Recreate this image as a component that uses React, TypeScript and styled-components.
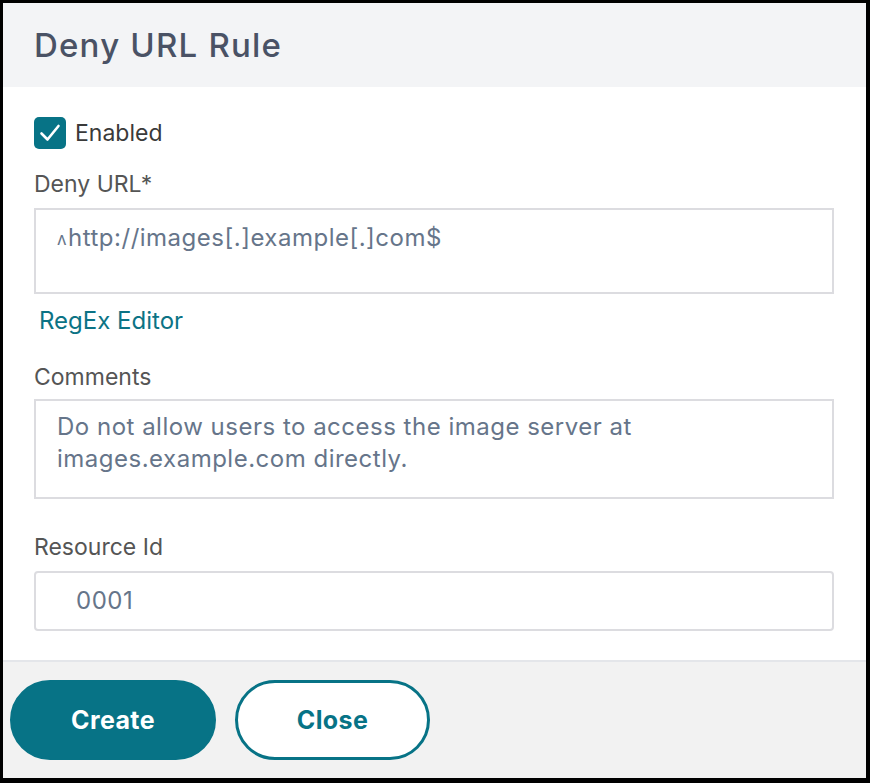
import React from "react";
import styled, { createGlobalStyle } from "styled-components";

const GlobalStyle = createGlobalStyle`
  html, body {
    margin: 0;
    padding: 0;
    background: #000;
  }
  * {
    box-sizing: border-box;
  }
`;

const FONT = `Inter, Roboto, "Liberation Sans", sans-serif`;

const Frame = styled.div`
  margin: 3px 4px 5px 3px;
  height: 775px;
  background: #fff;
  display: flex;
  flex-direction: column;
  font-family: ${FONT};
`;

const Header = styled.div`
  height: 84px;
  background: #f3f4f6;
  display: flex;
  align-items: center;
  padding-left: 31px;
`;

const Title = styled.h1`
  margin: 0;
  font-size: 33px;
  font-weight: 500;
  letter-spacing: 1.2px;
  color: #4a5265;
`;

const Body = styled.div`
  flex: 1;
  padding: 30px 32px 0 31px;
  display: flex;
  flex-direction: column;
`;

const CheckRow = styled.label`
  display: flex;
  align-items: center;
  gap: 9px;
  font-size: 23px;
  color: #3a3a3a;
  height: 32px;
`;

const CheckBox = styled.span`
  width: 32px;
  height: 32px;
  border-radius: 5px;
  background: #077386;
  display: flex;
  align-items: center;
  justify-content: center;
`;

const Label = styled.div<{ $top: number }>`
  margin-top: ${(p) => p.$top}px;
  font-size: 23px;
  line-height: 28px;
  color: #555555;
`;

const Box = styled.div<{ $height: number; $top: number; $padTop: number; $padLeft: number; $radius?: number }>`
  flex: none;
  height: ${(p) => p.$height}px;
  margin-top: ${(p) => p.$top}px;
  border: 2px solid #dcdce0;
  border-radius: ${(p) => p.$radius ?? 0}px;
  padding: ${(p) => p.$padTop}px 16px 0 ${(p) => p.$padLeft}px;
  font-size: 24px;
  letter-spacing: 0.5px;
  line-height: 32px;
  color: #66758a;
`;

const Caret = styled.span`
  font-size: 17px;
  vertical-align: 1px;
  margin-right: 1px;
`;

const Link = styled.a`
  margin-top: 13px;
  margin-left: 5px;
  font-size: 24px;
  line-height: 28px;
  color: #0c7385;
  text-decoration: none;
`;

const Footer = styled.div`
  height: 118px;
  border-top: 2px solid #e4e6ea;
  background: #f2f2f2;
  display: flex;
  align-items: center;
  gap: 19px;
  padding: 0 7px;
`;

const Button = styled.button<{ $primary?: boolean }>`
  height: 80px;
  width: ${(p) => (p.$primary ? 206 : 195)}px;
  border-radius: 40px;
  border: 3px solid #077386;
  background: ${(p) => (p.$primary ? "#077386" : "#fff")};
  color: ${(p) => (p.$primary ? "#fff" : "#077386")};
  font-family: ${FONT};
  font-size: 25px;
  letter-spacing: 0.4px;
  font-weight: 700;
`;

export default function App() {
  return (
    <>
      <GlobalStyle />
      <Frame>
        <Header>
          <Title>Deny URL Rule</Title>
        </Header>
        <Body>
          <CheckRow>
            <CheckBox>
              <svg width="22" height="20" viewBox="0 0 22 20">
                <path d="M2.5 10.5 L8.5 16.5 L19.5 3" fill="none" stroke="#fff" strokeWidth="2.6" strokeLinecap="round" strokeLinejoin="round" />
              </svg>
            </CheckBox>
            Enabled
          </CheckRow>
          <Label $top={21}>Deny URL*</Label>
          <Box $height={86} $top={10} $padTop={12} $padLeft={21}>
            <Caret>ʌ</Caret>http://images[.]example[.]com$
          </Box>
          <Link href="#">RegEx Editor</Link>
          <Label $top={28}>Comments</Label>
          <Box $height={100} $top={8} $padTop={10} $padLeft={21}>
            Do not allow users to access the image server at images.example.com directly.
          </Box>
          <Label $top={34}>Resource Id</Label>
          <Box $height={60} $top={10} $padTop={12} $padLeft={40} $radius={4}>
            0001
          </Box>
        </Body>
        <Footer>
          <Button $primary>Create</Button>
          <Button>Close</Button>
        </Footer>
      </Frame>
    </>
  );
}
